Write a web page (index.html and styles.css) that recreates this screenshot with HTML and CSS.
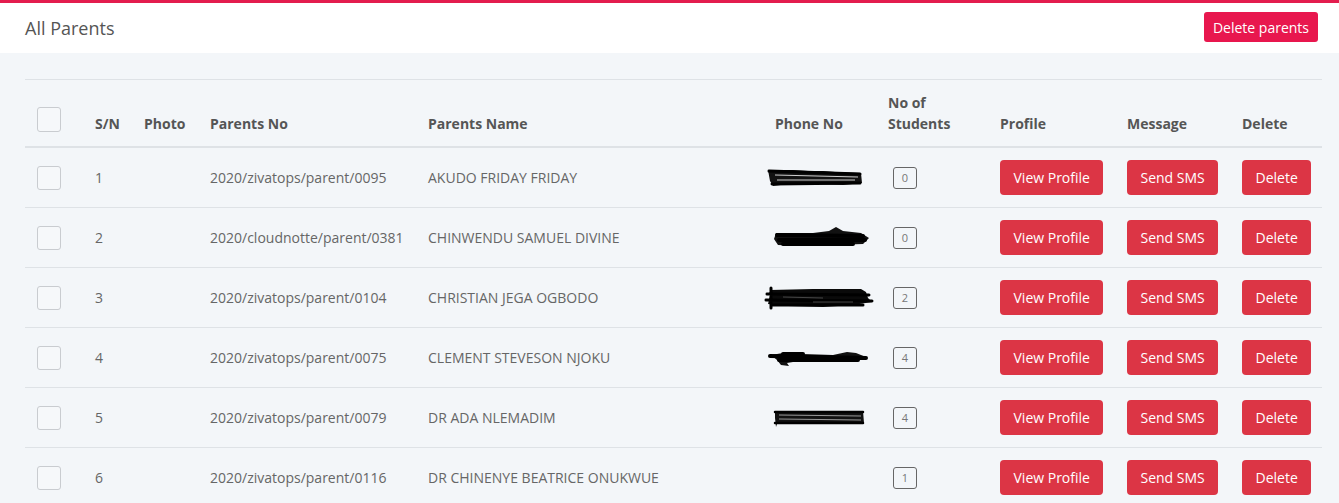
FILE: index.html
```html
<!DOCTYPE html>
<html>
<head>
<meta charset="utf-8">
<link rel="stylesheet" href="styles.css">
</head>
<body>
<div class="page">
  <header class="topbar">
    <h1 class="title">All Parents</h1>
    <button class="btn-primary-pink">Delete parents</button>
  </header>
  <main class="content">
    <table class="parents">
      <colgroup>
        <col class="c-check"><col class="c-sn"><col class="c-photo"><col class="c-no"><col class="c-name"><col class="c-phone"><col class="c-count"><col class="c-profile"><col class="c-msg"><col class="c-del">
      </colgroup>
      <thead>
        <tr>
          <th><span class="check"></span></th>
          <th>S/N</th>
          <th>Photo</th>
          <th>Parents No</th>
          <th>Parents Name</th>
          <th>Phone No</th>
          <th>No of<br>Students</th>
          <th>Profile</th>
          <th>Message</th>
          <th>Delete</th>
        </tr>
      </thead>
      <tbody>
        <tr>
          <td><span class="check"></span></td>
          <td>1</td>
          <td></td>
          <td>2020/zivatops/parent/0095</td>
          <td>AKUDO FRIDAY FRIDAY</td>
          <td class="phone"><svg class="scribble" width="113" height="30" viewBox="0 0 113 30"><path d="M5 7 L30 7 L45 8 L60 8 L72 9 L98 10 L99 20 L80 22 L50 21 L25 21 L10 23 L7 18 Z" fill="#111"/><path d="M12 12 L95 14 M14 17 L92 17" stroke="#cfcfcf" stroke-width="1"/><path d="M6 8 L97 11 M9 21 L97 20" stroke="#000" stroke-width="3" stroke-linecap="round"/></svg></td>
          <td><span class="badge">0</span></td>
          <td><button class="btn-danger">View Profile</button></td>
          <td><button class="btn-danger">Send SMS</button></td>
          <td><button class="btn-danger">Delete</button></td>
        </tr>
        <tr>
          <td><span class="check"></span></td>
          <td>2</td>
          <td></td>
          <td>2020/cloudnotte/parent/0381</td>
          <td>CHINWENDU SAMUEL DIVINE</td>
          <td class="phone"><svg class="scribble" width="113" height="30" viewBox="0 0 113 30"><path d="M13 10 L50 10 L66 8 L73 4 L80 8 L98 10 L106 15 L100 21 L70 22 L40 23 L15 22 L11 16 Z" fill="#111"/><path d="M14 12 L100 13 M16 17 L102 17 M20 21 L90 21" stroke="#000" stroke-width="4" stroke-linecap="round"/></svg></td>
          <td><span class="badge">0</span></td>
          <td><button class="btn-danger">View Profile</button></td>
          <td><button class="btn-danger">Send SMS</button></td>
          <td><button class="btn-danger">Delete</button></td>
        </tr>
        <tr>
          <td><span class="check"></span></td>
          <td>3</td>
          <td></td>
          <td>2020/zivatops/parent/0104</td>
          <td>CHRISTIAN JEGA OGBODO</td>
          <td class="phone"><svg class="scribble" width="113" height="30" viewBox="0 0 113 30"><path d="M7 7 L50 6 L98 6 L103 9 L105 15 L109 19 L90 22 L60 24 L25 23 L5 21 L7 13 Z" fill="#0a0a0a"/><path d="M4 11 L106 12 M3 17 L109 18 M10 22 L100 22 M8 5 L8 25" stroke="#000" stroke-width="3" stroke-linecap="round"/><path d="M20 14 L60 15 M50 19 L90 19" stroke="#555" stroke-width="0.8"/></svg></td>
          <td><span class="badge">2</span></td>
          <td><button class="btn-danger">View Profile</button></td>
          <td><button class="btn-danger">Send SMS</button></td>
          <td><button class="btn-danger">Delete</button></td>
        </tr>
        <tr>
          <td><span class="check"></span></td>
          <td>4</td>
          <td></td>
          <td>2020/zivatops/parent/0075</td>
          <td>CLEMENT STEVESON NJOKU</td>
          <td class="phone"><svg class="scribble" width="113" height="30" viewBox="0 0 113 30"><path d="M8 12 L20 10 L40 11 L70 12 L84 9 L93 10 L103 14 L88 18 L60 18 L30 19 L24 20 L26 23 L18 22 L14 17 Z" fill="#111"/><path d="M7 13 L103 15 M16 17 L95 17 M20 11 L40 11" stroke="#000" stroke-width="4" stroke-linecap="round"/></svg></td>
          <td><span class="badge">4</span></td>
          <td><button class="btn-danger">View Profile</button></td>
          <td><button class="btn-danger">Send SMS</button></td>
          <td><button class="btn-danger">Delete</button></td>
        </tr>
        <tr>
          <td><span class="check"></span></td>
          <td>5</td>
          <td></td>
          <td>2020/zivatops/parent/0079</td>
          <td>DR ADA NLEMADIM</td>
          <td class="phone"><svg class="scribble" width="113" height="30" viewBox="0 0 113 30"><path d="M12 8 L60 9 L100 8 L101 20 L60 21 L14 21 L13 24 L12 15 Z" fill="#111"/><path d="M16 12 L98 13 M16 16 L98 17" stroke="#bbb" stroke-width="0.8"/><path d="M12 9 L100 9 M12 20 L100 20" stroke="#000" stroke-width="2.5" stroke-linecap="round"/></svg></td>
          <td><span class="badge">4</span></td>
          <td><button class="btn-danger">View Profile</button></td>
          <td><button class="btn-danger">Send SMS</button></td>
          <td><button class="btn-danger">Delete</button></td>
        </tr>
        <tr>
          <td><span class="check"></span></td>
          <td>6</td>
          <td></td>
          <td>2020/zivatops/parent/0116</td>
          <td>DR CHINENYE BEATRICE ONUKWUE</td>
          <td class="phone"></td>
          <td><span class="badge">1</span></td>
          <td><button class="btn-danger">View Profile</button></td>
          <td><button class="btn-danger">Send SMS</button></td>
          <td><button class="btn-danger">Delete</button></td>
        </tr>
      </tbody>
    </table>
  </main>
</div>
</body>
</html>
```

FILE: styles.css
```css
* { box-sizing: border-box; }
html, body {
  margin: 0;
  padding: 0;
  background: #f3f6f9;
  font-family: "Open Sans", "Liberation Sans", sans-serif;
  font-size: 14px;
  color: #666;
}
.page {
  border-top: 3px solid #e31d4e;
  min-height: 100vh;
}
.topbar {
  background: #fff;
  height: 50px;
  display: flex;
  align-items: center;
  justify-content: space-between;
  padding: 0 21px 0 25px;
}
.title {
  margin: 0;
  font-size: 18px;
  font-weight: 400;
  color: #555;
}
.btn-primary-pink {
  background: #e8174e;
  color: #fff;
  border: 0;
  border-radius: 3px;
  font-family: inherit;
  font-size: 14px;
  height: 30px;
  padding: 0 9px;
  margin-top: -2px;
}
.content {
  padding: 26px 17px 0 25px;
}
.parents {
  width: 1297px;
  border-collapse: collapse;
  table-layout: fixed;
}
.c-check { width: 58px; }
.c-sn { width: 49px; }
.c-photo { width: 66px; }
.c-no { width: 218px; }
.c-name { width: 347px; }
.c-phone { width: 113px; }
.c-count { width: 112px; }
.c-profile { width: 127px; }
.c-msg { width: 115px; }
.c-del { width: 92px; }
.parents th {
  text-align: left;
  vertical-align: bottom;
  font-weight: 700;
  color: #555;
  line-height: 21px;
  padding: 12px 12px 12px;
  border-top: 1px solid #dee2e6;
  border-bottom: 2px solid #dee2e6;
}
.parents td {
  vertical-align: middle;
  padding: 12px 12px;
  line-height: 21px;
  border-bottom: 1px solid #dee2e6;
  white-space: nowrap;
}
.parents td.phone {
  padding: 0;
}
.scribble { display: block; }
.check {
  display: block;
  width: 24px;
  height: 24px;
  border: 1px solid #c9ccd0;
  border-radius: 3px;
  background: #f6f8fa;
}
.parents th .check { margin-bottom: 2px; height: 25px; }
.badge {
  display: inline-flex;
  align-items: center;
  justify-content: center;
  width: 24px;
  height: 22px;
  margin-left: 5px;
  border: 1px solid #666;
  border-radius: 3px;
  font-size: 11px;
  color: #777;
  line-height: 1;
}
.btn-danger {
  background: #dc3545;
  color: #fff;
  border: 0;
  border-radius: 4px;
  font-family: inherit;
  font-size: 14px;
  line-height: 21px;
  padding: 7px 13.5px;
  display: block;
}
```
